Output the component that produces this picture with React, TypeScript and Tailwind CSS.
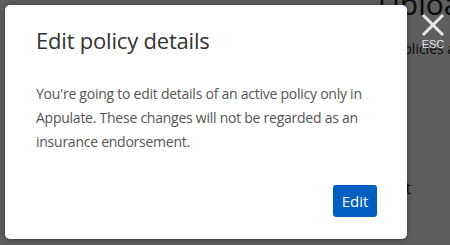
import React from 'react';

export default function App() {
  return (
    <div className="relative w-[450px] h-[245px] overflow-hidden bg-white font-['Open_Sans',sans-serif]">
      {/* page behind the overlay */}
      <div className="absolute inset-0 text-[#222] whitespace-nowrap">
        <div className="absolute left-[378px] top-[-14px] text-[30px] leading-[36px]">Upload</div>
        <div className="absolute left-[395px] top-[38px] text-[14px]">Policies and</div>
        <div className="absolute left-[376px] top-[176px] text-[16px]">Next</div>
      </div>
      <div className="absolute inset-0 bg-black/[0.63]" />

      {/* close */}
      <button className="absolute right-[4px] top-[12px] flex flex-col items-center text-[#e6e6e6]">
        <svg width="26" height="26" viewBox="0 0 26 26" fill="none" stroke="currentColor" strokeWidth="3" strokeLinecap="square">
          <path d="M4 4 L22 22 M22 4 L4 22" />
        </svg>
        <span className="text-[11px] leading-[12px] font-['Liberation_Sans',sans-serif]">ESC</span>
      </button>

      {/* dialog */}
      <div className="relative mt-[5px] ml-[5px] w-[402px] h-[234px] rounded-[5px] bg-white shadow-[0_0_6px_rgba(0,0,0,0.35)] px-[31px] pt-[20px] flex flex-col">
        <h2 className="text-[22px] leading-[30px] text-[#333] tracking-[-0.2px]">Edit policy details</h2>
        <p className="mt-[27px] text-[14px] leading-[24px] text-[#555] tracking-[-0.25px] whitespace-nowrap">
          You're going to edit details of an active policy only in
          <br />
          Appulate. These changes will not be regarded as an
          <br />
          insurance endorsement.
        </p>
        <div className="mt-auto mb-[22px] flex justify-end pr-[-0px]">
          <button className="h-[32px] w-[44px] rounded-[3px] bg-[#005fc1] text-white text-[15px] -mr-[1px]">Edit</button>
        </div>
      </div>
    </div>
  );
}
